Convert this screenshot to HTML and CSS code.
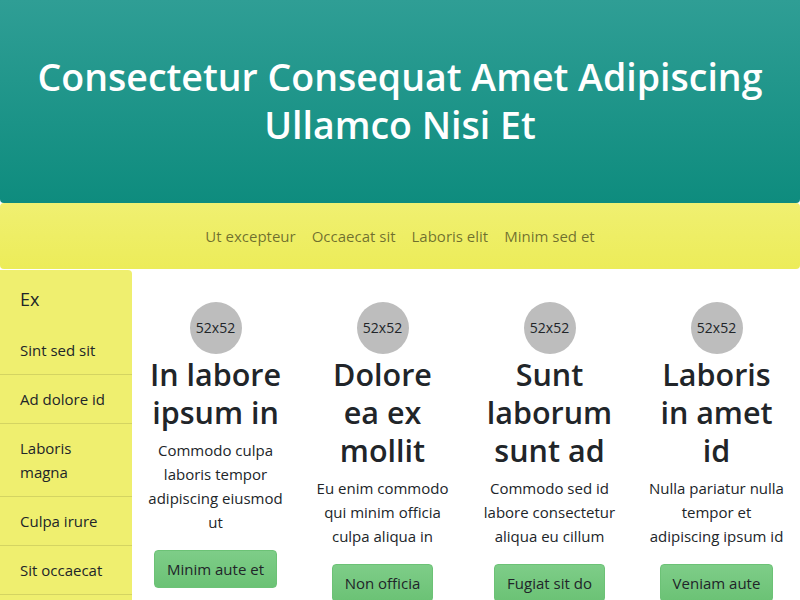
FILE: index.html
```html
<!DOCTYPE html>
<html lang="en">
<head>
<meta charset="utf-8">
<title>Consectetur</title>
<link rel="stylesheet" href="styles.css">
</head>
<body>
<header class="hero">
  <h1 class="hero-title">Consectetur Consequat Amet Adipiscing Ullamco Nisi Et</h1>
</header>
<nav class="topnav">
  <a class="topnav-link" href="#">Ut excepteur</a>
  <a class="topnav-link" href="#">Occaecat sit</a>
  <a class="topnav-link" href="#">Laboris elit</a>
  <a class="topnav-link" href="#">Minim sed et</a>
</nav>
<div class="layout">
  <aside class="sidebar">
    <h2 class="sidebar-title">Ex</h2>
    <ul class="sidebar-list">
      <li class="sidebar-item">Sint sed sit</li>
      <li class="sidebar-item">Ad dolore id</li>
      <li class="sidebar-item">Laboris magna</li>
      <li class="sidebar-item">Culpa irure</li>
      <li class="sidebar-item">Sit occaecat</li>
    </ul>
  </aside>
  <main class="cards">
    <section class="card">
      <div class="avatar">52x52</div>
      <h3 class="card-title">In labore ipsum in</h3>
      <p class="card-text">Commodo culpa laboris tempor adipiscing eiusmod ut</p>
      <button class="btn">Minim aute et</button>
    </section>
    <section class="card">
      <div class="avatar">52x52</div>
      <h3 class="card-title">Dolore ea ex mollit</h3>
      <p class="card-text">Eu enim commodo qui minim officia culpa aliqua in</p>
      <button class="btn">Non officia</button>
    </section>
    <section class="card">
      <div class="avatar">52x52</div>
      <h3 class="card-title">Sunt laborum sunt ad</h3>
      <p class="card-text">Commodo sed id labore consectetur aliqua eu cillum</p>
      <button class="btn">Fugiat sit do</button>
    </section>
    <section class="card">
      <div class="avatar">52x52</div>
      <h3 class="card-title">Laboris in amet id</h3>
      <p class="card-text">Nulla pariatur nulla tempor et adipiscing ipsum id</p>
      <button class="btn">Veniam aute</button>
    </section>
  </main>
</div>
</body>
</html>
```
FILE: styles.css
```css
* { box-sizing: border-box; }
html, body { margin: 0; padding: 0; }
body {
  font-family: "Open Sans", "Noto Sans", sans-serif;
  color: #212529;
  background: #fff;
  font-size: 15px;
  line-height: 1.6;
}
.hero {
  background: linear-gradient(to bottom, #2f9e95, #0e8c7e);
  border-radius: 0 0 4px 4px;
  height: 203px;
  display: flex;
  align-items: center;
  justify-content: center;
  padding: 0 24px 2px;
}
.hero-title {
  margin: 0;
  color: #fff;
  font-size: 37.5px;
  font-weight: 600;
  line-height: 48px;
  text-align: center;
}
.topnav {
  background: linear-gradient(to bottom, #f0f071, #ecec59);
  border-radius: 4px;
  height: 66px;
  display: flex;
  align-items: center;
  justify-content: center;
  margin-bottom: 1px;
}
.topnav-link {
  color: rgba(0,0,0,0.55);
  text-decoration: none;
  padding: 0 8px;
  line-height: 24px;
  font-size: 15px;
}
.layout {
  display: flex;
  align-items: flex-start;
}
.sidebar {
  width: 132px;
  flex: none;
  background: #efef6f;
  border-radius: 0 4px 0 0;
  padding-top: 16px;
  min-height: 340px;
}
.sidebar-title {
  margin: 0 0 13px;
  padding: 0 20px;
  font-size: 18px;
  font-weight: 400;
  line-height: 27px;
}
.sidebar-list {
  list-style: none;
  margin: 0;
  padding: 0;
}
.sidebar-item {
  padding: 12px 20px;
  line-height: 24px;
  border-bottom: 1px solid rgba(0,0,0,0.11);
}
.cards {
  flex: 1;
  display: grid;
  grid-template-columns: repeat(4, 1fr);
  padding-top: 32px;
}
.card {
  display: flex;
  flex-direction: column;
  align-items: center;
  text-align: center;
  padding: 0 14px;
}
.avatar {
  width: 52px;
  height: 52px;
  border-radius: 50%;
  background: #bdbdbd;
  display: flex;
  align-items: center;
  justify-content: center;
  font-size: 14px;
  color: #212529;
}
.card-title {
  margin: 1px 0 7px;
  font-size: 30.5px;
  font-weight: 600;
  line-height: 38px;
}
.card-text {
  margin: 0 0 16px;
  line-height: 24px;
}
.btn {
  font-family: inherit;
  font-size: 15px;
  line-height: 24px;
  color: #212529;
  background: linear-gradient(to bottom, #7ecd88, #6bc275);
  border: 1px solid #6cc276;
  border-radius: 4px;
  padding: 6px 12px;
}
```
